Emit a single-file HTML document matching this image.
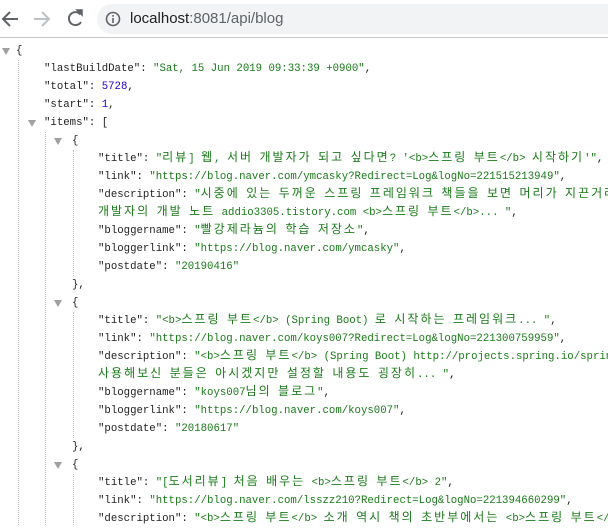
<!DOCTYPE html>
<html><head><meta charset="utf-8"><style>
html,body{margin:0;padding:0;width:608px;height:525px;overflow:hidden;background:#fff;}
.bar{position:absolute;left:0;top:0;width:608px;height:37px;background:#fff;border-bottom:1px solid #c8c8c8;}
.omni{position:absolute;left:97px;top:4px;width:530px;height:30px;border-radius:15px;background:#f1f3f4;}
.url{position:absolute;left:130px;top:10px;font:15px "Liberation Sans",sans-serif;color:#202124;}
.url span{color:#5f6368;}
.r{position:absolute;white-space:pre;font:10.7px "Liberation Mono","Noto Sans CJK KR",monospace;color:#222;height:18px;line-height:18px;}
.s{color:#1a7a1a;}
.n{color:#1c00cf;}
.k{font-family:"Noto Sans CJK KR",sans-serif;font-size:12px;letter-spacing:2px;line-height:10px;}
.t{position:absolute;width:0;height:0;border-left:4px solid transparent;border-right:4px solid transparent;border-top:7px solid #a0a0a0;}
.v{position:absolute;width:0;border-left:1px dotted #c0c0c0;}
</style></head><body>
<div class="bar">
<svg style="position:absolute;left:0;top:0" width="96" height="37">
<path d="M18 19 H4 M10 12 L3 19 L10 26" stroke="#5f6368" stroke-width="2" fill="none"/>
<path d="M34 19 H48 M42 12 L49 19 L42 26" stroke="#bdc1c6" stroke-width="2" fill="none"/>
<path d="M80.5 14.5 A6.5 6.5 0 1 0 81 22" stroke="#5f6368" stroke-width="2" fill="none"/>
<path d="M77 10 L82 10 L82 15 Z" fill="#5f6368" stroke="#5f6368" stroke-width="1.5"/>
</svg>
<div class="omni"></div>
<svg style="position:absolute;left:105px;top:11px" width="16" height="16"><circle cx="8" cy="8" r="6.5" stroke="#5f6368" stroke-width="1.6" fill="none"/><rect x="7.2" y="7" width="1.6" height="5" fill="#5f6368"/><rect x="7.2" y="4" width="1.6" height="1.7" fill="#5f6368"/></svg>
<div class="url">localhost<span>:8081/api/blog</span></div>
</div>

<div class="t" style="left:2px;top:48px"></div>
<div class="t" style="left:28px;top:120px"></div>
<div class="t" style="left:54px;top:138px"></div>
<div class="t" style="left:54px;top:300px"></div>
<div class="t" style="left:54px;top:462px"></div>

<div class="v" style="left:18px;top:60px;height:465px"></div>
<div class="v" style="left:45px;top:132px;height:393px"></div>
<div class="v" style="left:73px;top:150px;height:126px"></div>
<div class="v" style="left:73px;top:312px;height:126px"></div>
<div class="v" style="left:73px;top:474px;height:51px"></div>

<div class="r" style="left:16px;top:42px">{</div>
<div class="r" style="left:44px;top:60px">"lastBuildDate": <span class="s">"Sat, 15 Jun 2019 09:33:39 +0900"</span>,</div>
<div class="r" style="left:44px;top:78px">"total": <span class="n">5728</span>,</div>
<div class="r" style="left:44px;top:96px">"start": <span class="n">1</span>,</div>
<div class="r" style="left:44px;top:114px">"items": [</div>
<div class="r" style="left:72px;top:132px">{</div>
<div class="r" style="left:98px;top:150px">"title": <span class="s">"<span class="k">리뷰</span>] <span class="k">웹</span>, <span class="k">서버</span> <span class="k">개발자가</span> <span class="k">되고</span> <span class="k">싶다면</span>? '&lt;b&gt;<span class="k">스프링</span> <span class="k">부트</span>&lt;/b&gt; <span class="k">시작하기</span>'"</span>,</div>
<div class="r" style="left:98px;top:168px">"link": <span class="s">"https://blog.naver.com/ymcasky?Redirect=Log&amp;logNo=221515213949"</span>,</div>
<div class="r" style="left:98px;top:186px">"description": <span class="s">"<span class="k">시중에</span> <span class="k">있는</span> <span class="k">두꺼운</span> <span class="k">스프링</span> <span class="k">프레임워크</span> <span class="k">책들을</span> <span class="k">보면</span> <span class="k">머리가</span> <span class="k">지끈거려</span></span></div>
<div class="r" style="left:98px;top:204px"><span class="s"><span class="k">개발자의</span> <span class="k">개발</span> <span class="k">노트</span> addio3305.tistory.com &lt;b&gt;<span class="k">스프링</span> <span class="k">부트</span>&lt;/b&gt;... "</span>,</div>
<div class="r" style="left:98px;top:222px">"bloggername": <span class="s">"<span class="k">빨강제라늄의</span> <span class="k">학습</span> <span class="k">저장소</span>"</span>,</div>
<div class="r" style="left:98px;top:240px">"bloggerlink": <span class="s">"https://blog.naver.com/ymcasky"</span>,</div>
<div class="r" style="left:98px;top:258px">"postdate": <span class="s">"20190416"</span></div>
<div class="r" style="left:72px;top:276px">},</div>
<div class="r" style="left:72px;top:294px">{</div>
<div class="r" style="left:98px;top:312px">"title": <span class="s">"&lt;b&gt;<span class="k">스프링</span> <span class="k">부트</span>&lt;/b&gt; (Spring Boot) <span class="k">로</span> <span class="k">시작하는</span> <span class="k">프레임워크</span>... "</span>,</div>
<div class="r" style="left:98px;top:330px">"link": <span class="s">"https://blog.naver.com/koys007?Redirect=Log&amp;logNo=221300759959"</span>,</div>
<div class="r" style="left:98px;top:348px">"description": <span class="s">"&lt;b&gt;<span class="k">스프링</span> <span class="k">부트</span>&lt;/b&gt; (Spring Boot) http://projects.spring.io/spring</span></div>
<div class="r" style="left:98px;top:366px"><span class="s"><span class="k">사용해보신</span> <span class="k">분들은</span> <span class="k">아시겠지만</span> <span class="k">설정할</span> <span class="k">내용도</span> <span class="k">굉장히</span>... "</span>,</div>
<div class="r" style="left:98px;top:384px">"bloggername": <span class="s">"koys007<span class="k">님의</span> <span class="k">블로그</span>"</span>,</div>
<div class="r" style="left:98px;top:402px">"bloggerlink": <span class="s">"https://blog.naver.com/koys007"</span>,</div>
<div class="r" style="left:98px;top:420px">"postdate": <span class="s">"20180617"</span></div>
<div class="r" style="left:72px;top:438px">},</div>
<div class="r" style="left:72px;top:456px">{</div>
<div class="r" style="left:98px;top:474px">"title": <span class="s">"[<span class="k">도서리뷰</span>] <span class="k">처음</span> <span class="k">배우는</span> &lt;b&gt;<span class="k">스프링</span> <span class="k">부트</span>&lt;/b&gt; 2"</span>,</div>
<div class="r" style="left:98px;top:492px">"link": <span class="s">"https://blog.naver.com/lsszz210?Redirect=Log&amp;logNo=221394660299"</span>,</div>
<div class="r" style="left:98px;top:510px">"description": <span class="s">"&lt;b&gt;<span class="k">스프링</span> <span class="k">부트</span>&lt;/b&gt; <span class="k">소개</span> <span class="k">역시</span> <span class="k">책의</span> <span class="k">초반부에서는</span> &lt;b&gt;<span class="k">스프링</span> <span class="k">부트</span>&lt;/b&gt;</span></div>
</body></html>
